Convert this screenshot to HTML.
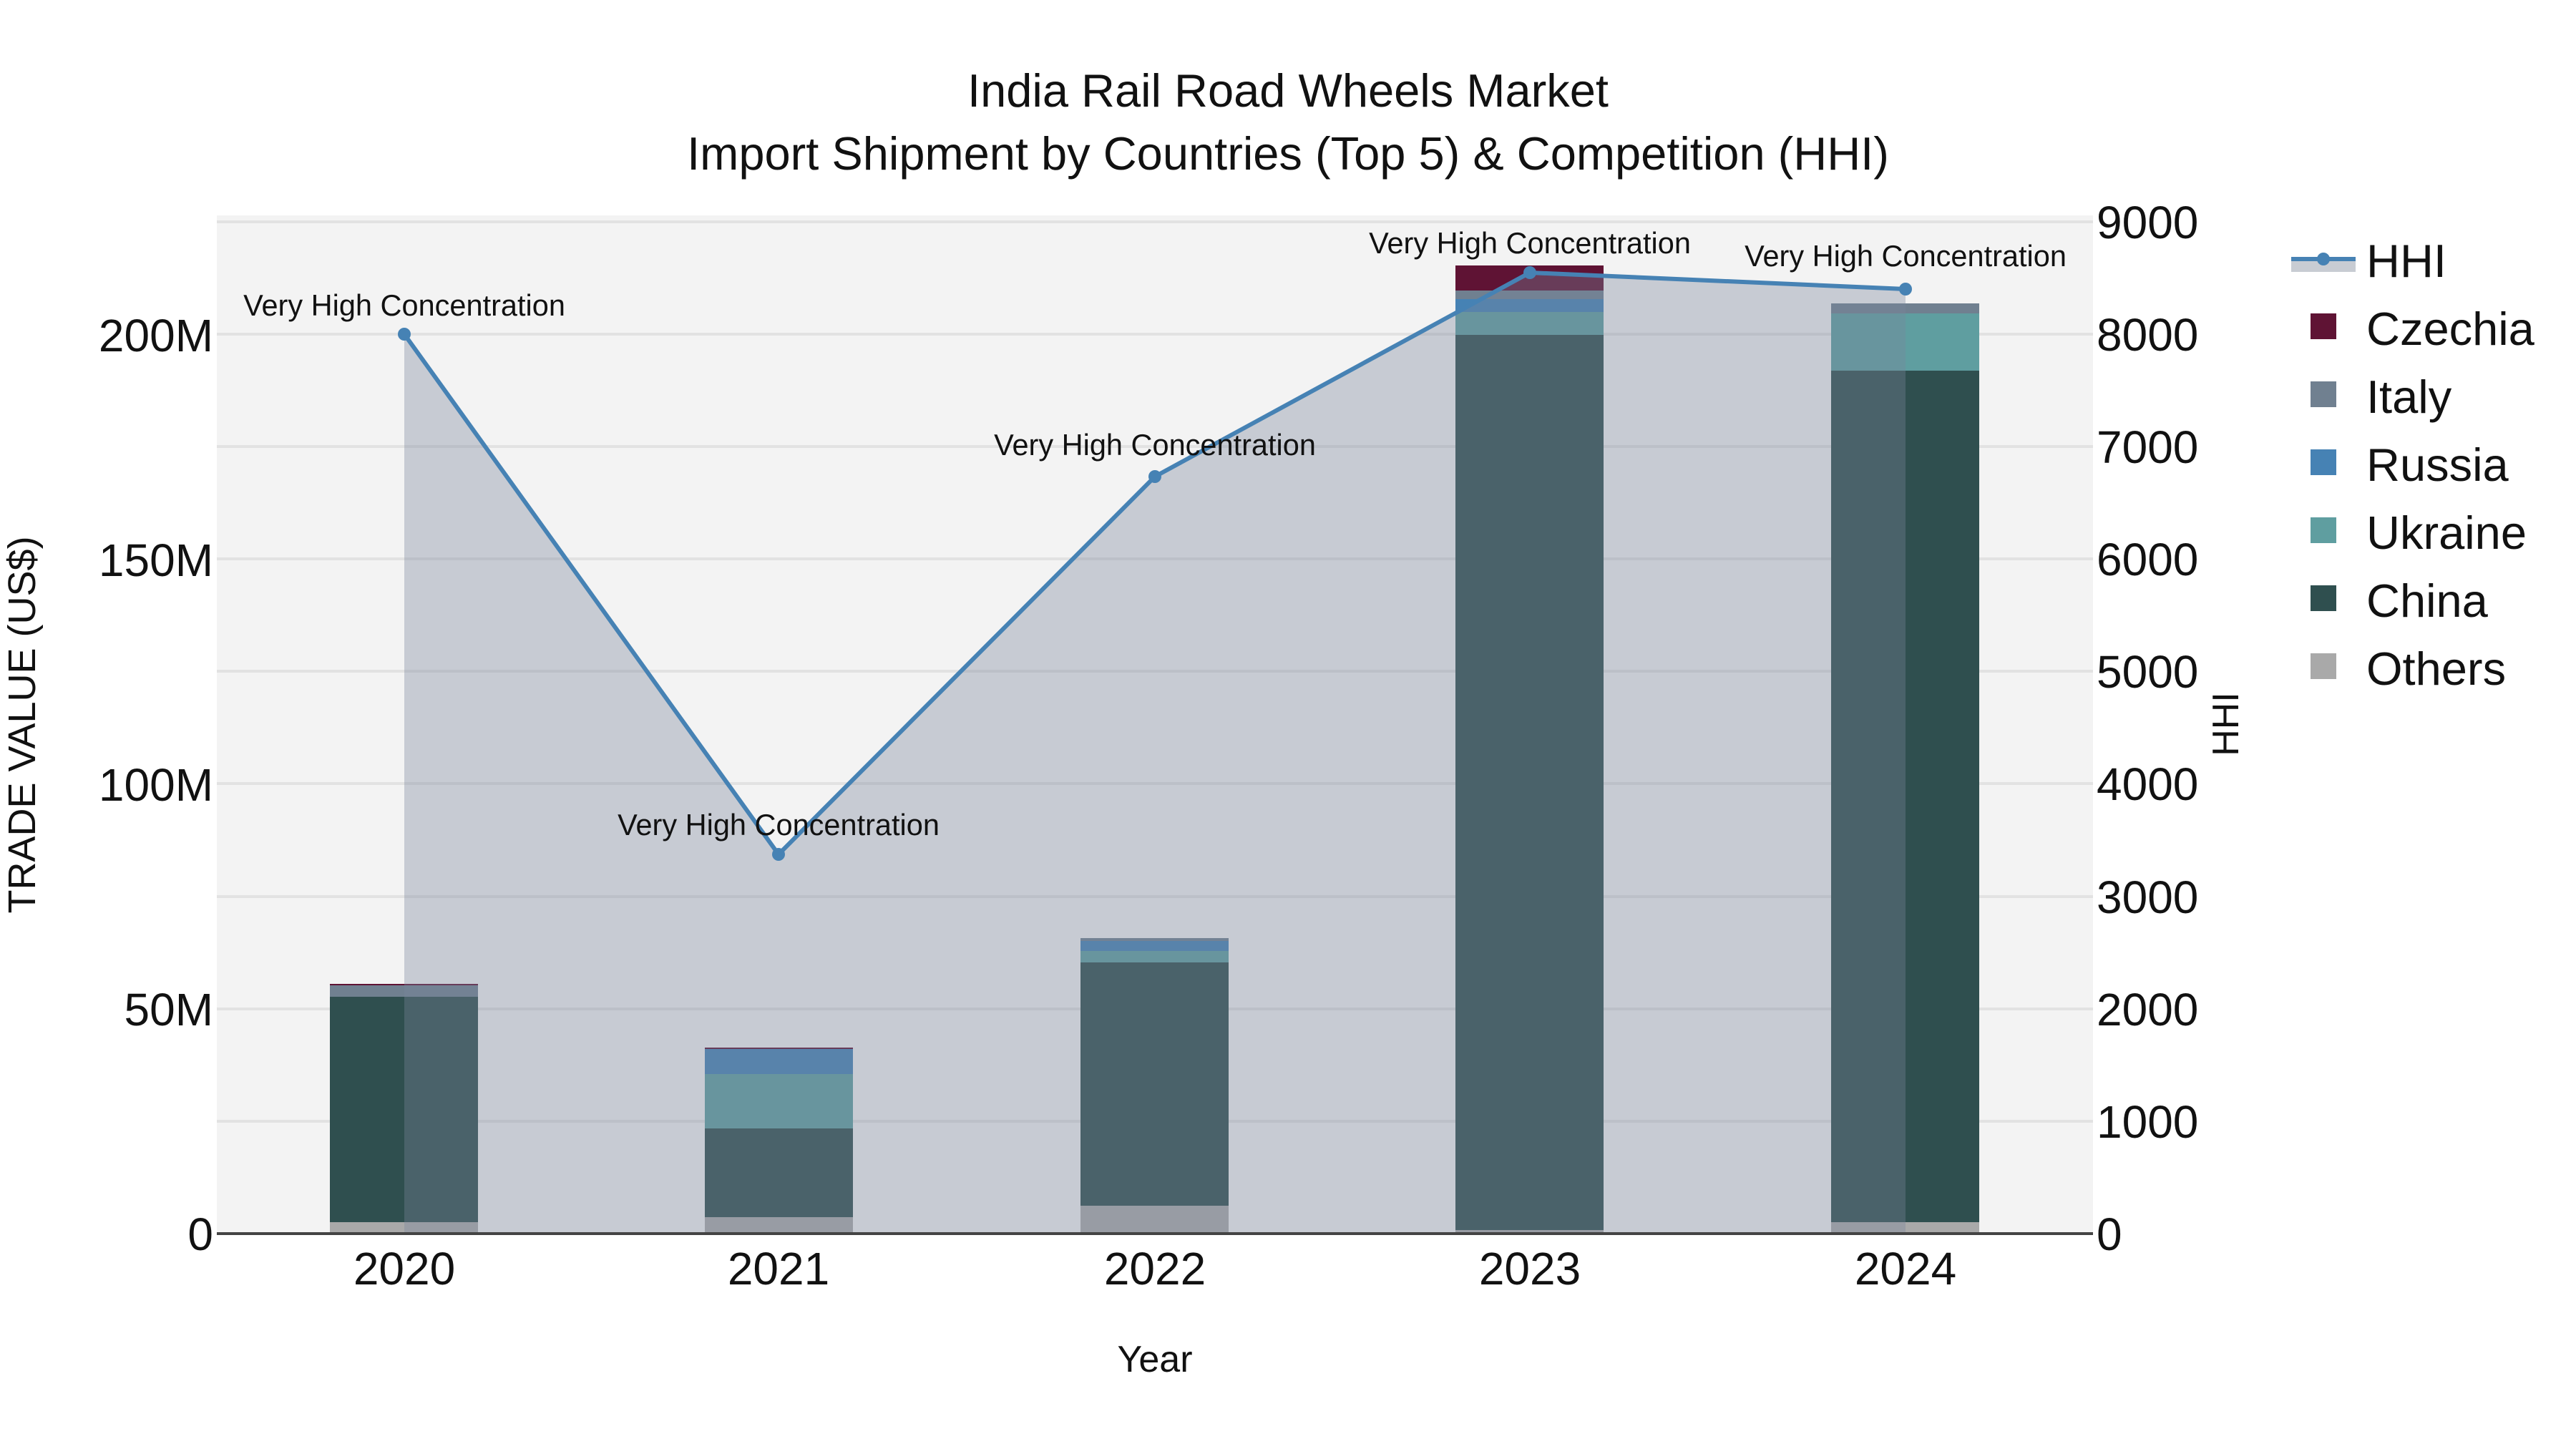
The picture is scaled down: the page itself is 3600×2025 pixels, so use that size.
<!DOCTYPE html>
<html><head><meta charset="utf-8"><style>html,body{margin:0;padding:0;background:#fff}svg{display:block}text{font-family:"Liberation Sans",Arial,sans-serif;fill:#111}</style></head>
<body>
<svg width="3600" height="2025" viewBox="0 0 3600 2025" xmlns="http://www.w3.org/2000/svg">
<rect x="0" y="0" width="3600" height="2025" fill="#fff"/>
<rect x="303" y="301" width="2622" height="1423" fill="#f3f3f3"/>
<g stroke="#e2e2e2" stroke-width="4">
<line x1="303" x2="2925" y1="310" y2="310"/>
<line x1="303" x2="2925" y1="467" y2="467"/>
<line x1="303" x2="2925" y1="624" y2="624"/>
<line x1="303" x2="2925" y1="781" y2="781"/>
<line x1="303" x2="2925" y1="938" y2="938"/>
<line x1="303" x2="2925" y1="1095" y2="1095"/>
<line x1="303" x2="2925" y1="1253" y2="1253"/>
<line x1="303" x2="2925" y1="1410" y2="1410"/>
<line x1="303" x2="2925" y1="1567" y2="1567"/>
</g>
<g>
<rect x="461" y="1708" width="207" height="16" fill="#a9a9a9"/>
<rect x="461" y="1393" width="207" height="315" fill="#2f4f4f"/>
<rect x="461" y="1377" width="207" height="16" fill="#708090"/>
<rect x="461" y="1375" width="207" height="2" fill="#5f1334"/>

<rect x="985" y="1701" width="207" height="23" fill="#a9a9a9"/>
<rect x="985" y="1577" width="207" height="124" fill="#2f4f4f"/>
<rect x="985" y="1501" width="207" height="76" fill="#5f9ea0"/>
<rect x="985" y="1466" width="207" height="35" fill="#4682b4"/>
<rect x="985" y="1464" width="207" height="2" fill="#5f1334"/>

<rect x="1510" y="1685" width="207" height="39" fill="#a9a9a9"/>
<rect x="1510" y="1345" width="207" height="340" fill="#2f4f4f"/>
<rect x="1510" y="1329" width="207" height="16" fill="#5f9ea0"/>
<rect x="1510" y="1315" width="207" height="14" fill="#4682b4"/>
<rect x="1510" y="1311" width="207" height="4" fill="#708090"/>

<rect x="2034" y="1719" width="207" height="5" fill="#a9a9a9"/>
<rect x="2034" y="468" width="207" height="1251" fill="#2f4f4f"/>
<rect x="2034" y="436" width="207" height="32" fill="#5f9ea0"/>
<rect x="2034" y="418" width="207" height="18" fill="#4682b4"/>
<rect x="2034" y="406" width="207" height="12" fill="#708090"/>
<rect x="2034" y="371" width="207" height="35" fill="#5f1334"/>

<rect x="2559" y="1708" width="207" height="16" fill="#a9a9a9"/>
<rect x="2559" y="518" width="207" height="1190" fill="#2f4f4f"/>
<rect x="2559" y="438" width="207" height="80" fill="#5f9ea0"/>
<rect x="2559" y="424" width="207" height="14" fill="#708090"/>
</g>
<polygon points="565,1724 565,467 1088,1194 1614,666 2138,381 2663,404 2663,1724" fill="rgba(123,134,154,0.36)"/>
<line x1="303" x2="2925" y1="1724" y2="1724" stroke="#444" stroke-width="4"/>
<polyline points="565,467 1088,1194 1614,666 2138,381 2663,404" fill="none" stroke="#4682b4" stroke-width="6"/>
<g fill="#4682b4">
<circle cx="565" cy="467" r="9"/><circle cx="1088" cy="1194" r="9"/><circle cx="1614" cy="666" r="9"/><circle cx="2138" cy="381" r="9"/><circle cx="2663" cy="404" r="9"/>
</g>
<g font-size="41.5" text-anchor="middle">
<text x="565" y="441">Very High Concentration</text>
<text x="1088" y="1167">Very High Concentration</text>
<text x="1614" y="636">Very High Concentration</text>
<text x="2138" y="354">Very High Concentration</text>
<text x="2663" y="372">Very High Concentration</text>
</g>
<g font-size="65" text-anchor="middle">
<text x="1800" y="149">India Rail Road Wheels Market</text>
<text x="1800" y="237">Import Shipment by Countries (Top 5) &amp; Competition (HHI)</text>
</g>
<g font-size="64" text-anchor="end">
<text x="298" y="491">200M</text>
<text x="298" y="805">150M</text>
<text x="298" y="1119">100M</text>
<text x="298" y="1433">50M</text>
<text x="298" y="1747">0</text>
</g>
<g font-size="64" text-anchor="start">
<text x="2930" y="333">9000</text>
<text x="2930" y="490">8000</text>
<text x="2930" y="647">7000</text>
<text x="2930" y="804">6000</text>
<text x="2930" y="961">5000</text>
<text x="2930" y="1118">4000</text>
<text x="2930" y="1276">3000</text>
<text x="2930" y="1433">2000</text>
<text x="2930" y="1590">1000</text>
<text x="2930" y="1747">0</text>
</g>
<g font-size="64" text-anchor="middle">
<text x="565" y="1795">2020</text>
<text x="1088" y="1795">2021</text>
<text x="1614" y="1795">2022</text>
<text x="2138" y="1795">2023</text>
<text x="2663" y="1795">2024</text>
</g>
<text x="1614" y="1917" font-size="52" text-anchor="middle">Year</text>
<text transform="translate(49,1013) rotate(-90)" font-size="54" text-anchor="middle">TRADE VALUE (US$)</text>
<text transform="translate(3128,1012) rotate(-90)" font-size="52" text-anchor="middle">HHI</text>
<rect x="3202" y="362" width="90" height="18" fill="#c8ccd3"/>
<line x1="3202" x2="3292" y1="362" y2="362" stroke="#4682b4" stroke-width="6"/>
<circle cx="3247" cy="362" r="9" fill="#4682b4"/>
<rect x="3229" y="438" width="36" height="36" fill="#5f1334"/>
<rect x="3229" y="533" width="36" height="36" fill="#708090"/>
<rect x="3229" y="628" width="36" height="36" fill="#4682b4"/>
<rect x="3229" y="723" width="36" height="36" fill="#5f9ea0"/>
<rect x="3229" y="818" width="36" height="36" fill="#2f4f4f"/>
<rect x="3229" y="913" width="36" height="36" fill="#a9a9a9"/>
<g font-size="65">
<text x="3307" y="387">HHI</text>
<text x="3307" y="482">Czechia</text>
<text x="3307" y="577">Italy</text>
<text x="3307" y="672">Russia</text>
<text x="3307" y="767">Ukraine</text>
<text x="3307" y="862">China</text>
<text x="3307" y="957">Others</text>
</g>
</svg>
</body></html>
